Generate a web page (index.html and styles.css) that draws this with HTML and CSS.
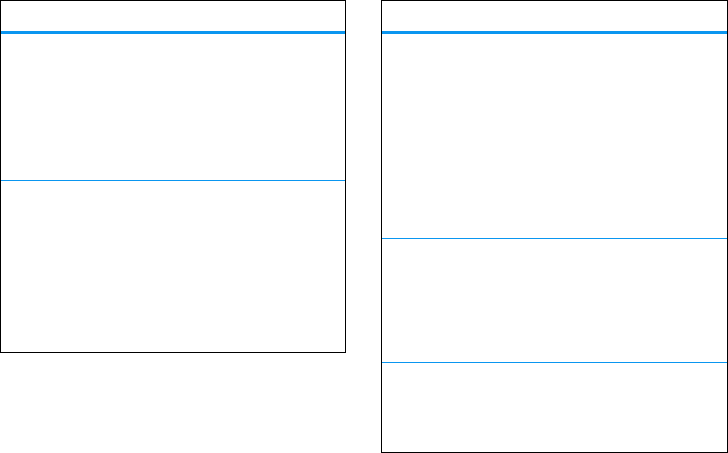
FILE: index.html
```html
<!DOCTYPE html>
<html>
<head>
<meta charset="utf-8">
<link rel="stylesheet" href="styles.css">
</head>
<body>
<div class="page">
  <div class="table table-left">
    <div class="head"></div>
    <div class="row row-l1"></div>
    <div class="row row-l2"></div>
  </div>
  <div class="table table-right">
    <div class="head"></div>
    <div class="row row-r1"></div>
    <div class="row row-r2"></div>
    <div class="row row-r3"></div>
  </div>
</div>
</body>
</html>
```

FILE: styles.css
```css
html, body {
  margin: 0;
  padding: 0;
  background: #ffffff;
  font-family: "Liberation Sans", Arial, sans-serif;
}
.page {
  display: flex;
  align-items: flex-start;
  gap: 35px;
  width: 728px;
  height: 453px;
}
.table {
  border: 1px solid #000000;
  display: flex;
  flex-direction: column;
  flex: none;
}
.table-left { width: 344px; }
.table-right { width: 345px; }
.head {
  height: 30px;
  border-bottom: 3px solid #0a96f0;
}
.row {
  border-bottom: 1px solid #0a96f0;
}
.row:last-child { border-bottom: none; }
.row-l1 { height: 146px; }
.row-l2 { height: 171px; }
.row-r1 { height: 204px; }
.row-r2 { height: 123px; }
.row-r3 { height: 89px; }
```
